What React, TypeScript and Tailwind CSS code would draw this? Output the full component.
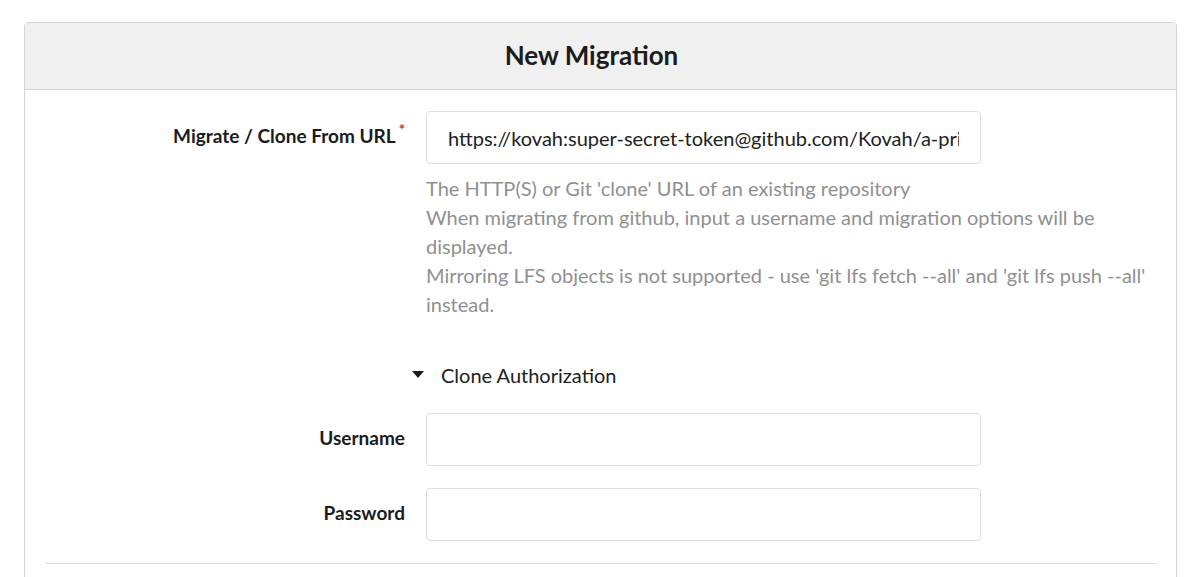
import React from "react";

const Row = ({ label, required, children }: { label: string; required?: boolean; children: React.ReactNode }) => (
  <div className="grid grid-cols-[360px_555px] gap-x-[21px] items-center">
    <label className="text-right font-bold text-[19px] text-[#1b1c1d] -mt-[3px]">
      {label}
      {required && <span className="text-[#db2828] relative -top-[8px] ml-[3px] text-[15px]">*</span>}
    </label>
    {children}
  </div>
);

const App = () => {
  return (
    <div className="w-[1200px] h-[577px] bg-white overflow-hidden pt-[22px] pl-[24px] font-['Lato','Noto_Sans',sans-serif] text-[#212121]">
      <div className="w-[1153px] border border-[#d4d4d5] rounded-t-[4px] h-[600px]">
        <div className="h-[67px] bg-[#f0f0f0] border-b border-[#d4d4d5] flex items-center justify-center pr-[18px]">
          <h3 className="text-[26px] font-bold text-[#1b1c1d] -mt-[2px]">New Migration</h3>
        </div>
        <div className="pt-[21px] px-[20px]">
          <Row label="Migrate / Clone From URL" required>
            <input
              readOnly
              value="https://kovah:super-secret-token@github.com/Kovah/a-private-repository.git"
              className="h-[53px] border border-[#dedede] rounded-[4px] px-[21px] text-[20px] text-[#212121] outline-none"
            />
          </Row>
          <div className="ml-[381px] mt-[10px] text-[20px] leading-[29px] text-[#909090]">
            <div>The HTTP(S) or Git 'clone' URL of an existing repository</div>
            <div>When migrating from github, input a username and migration options will be displayed.</div>
            <div>Mirroring LFS objects is not supported - use 'git lfs fetch --all' and 'git lfs push --all' instead.</div>
          </div>
          <div className="ml-[367px] mt-[41px] flex items-center h-[29px] text-[20px] text-[#212121]">
            <span className="w-0 h-0 border-l-[6px] border-r-[6px] border-t-[7px] border-l-transparent border-r-transparent border-t-[#1b1c1d]" />
            <span className="ml-[17px]">Clone Authorization</span>
          </div>
          <div className="mt-[24px] flex flex-col gap-[22px]">
            <Row label="Username">
              <input className="h-[53px] border border-[#dedede] rounded-[4px] px-[21px] text-[20px] outline-none" />
            </Row>
            <Row label="Password">
              <input type="password" className="h-[53px] border border-[#dedede] rounded-[4px] px-[21px] text-[20px] outline-none" />
            </Row>
          </div>
          <div className="mt-[22px] border-t border-[#dedede]" />
        </div>
      </div>
    </div>
  );
};

export default App;
